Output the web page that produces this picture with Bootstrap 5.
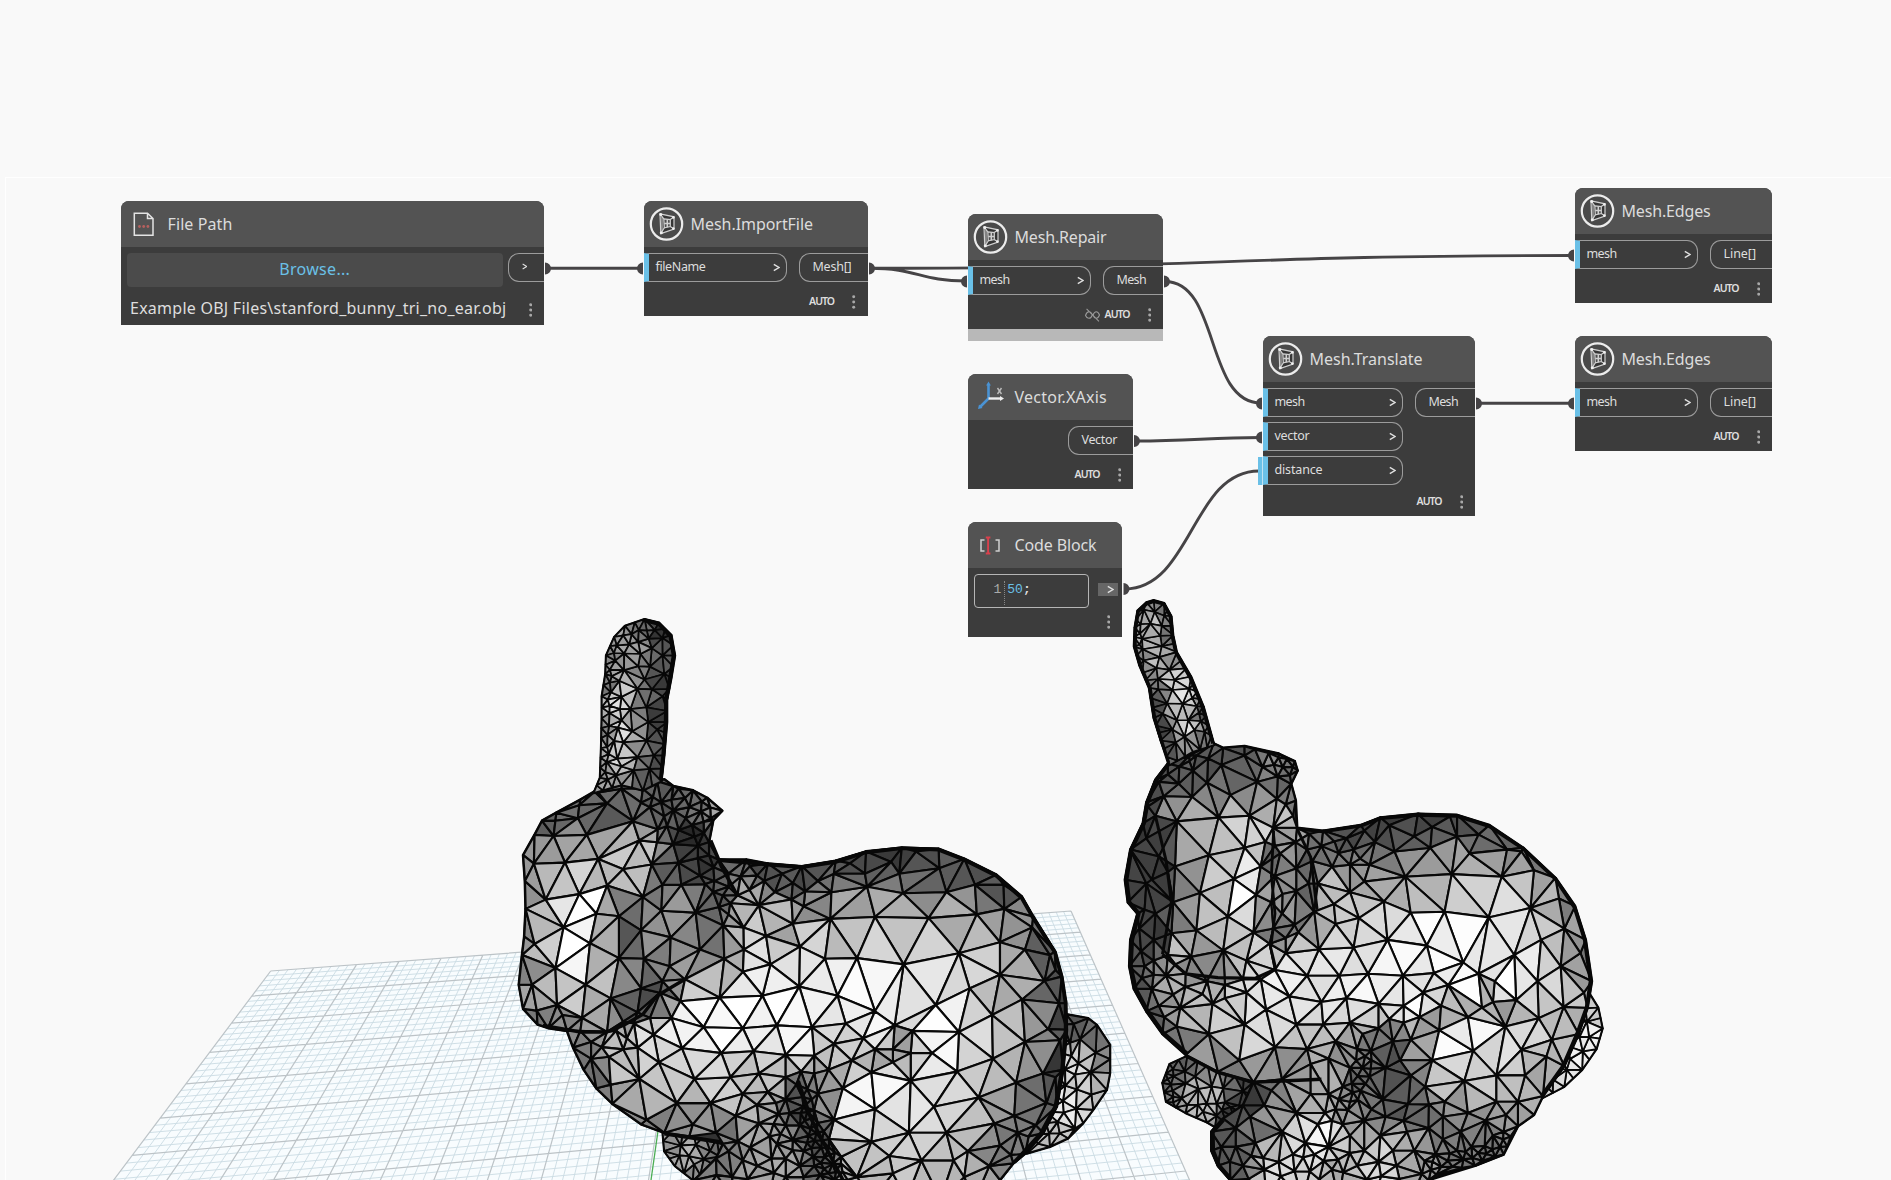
<!DOCTYPE html>
<html lang="en">
<head>
<meta charset="utf-8">
<title>Mesh graph</title>
<link href="https://cdn.jsdelivr.net/npm/bootstrap@5.3.0/dist/css/bootstrap.min.css" rel="stylesheet">
<script src="https://cdn.jsdelivr.net/npm/bootstrap@5.3.0/dist/js/bootstrap.bundle.min.js"></script>
<style>
body{margin:0;background:#f9f9f9;font-family:"Noto Sans","Open Sans",sans-serif;overflow:hidden}
.workspace{width:1891px;height:1180px}
.frame-line{left:5px;top:177px;right:0;bottom:0;border:solid #fff;border-width:1.5px 0 0 1px}
.gnode{background:#3c3c3c;border-radius:8px 8px 0 0;color:#dedede}
.ghead{height:46px;background:#535353;border-radius:8px 8px 0 0;padding-left:5px}
.ghead svg{width:35px;height:36px;flex:none;margin-right:6.5px;margin-bottom:1px}
.gtitle{font-size:16px;line-height:20px;color:#dcdcdc}
.gports{padding-top:6px}
.gports .ins,.gports .outs{gap:5px}
.pin,.pout{height:29px;border:1.3px solid #9c9c9c;font-size:12.5px;line-height:1}
.pin{border-left:5px solid #6ac0e7;border-radius:0 11px 11px 0;padding-left:6.5px;padding-right:6px}
.pout{border-right:0;border-radius:11px 0 0 11px;padding-left:12.5px}
.caret{width:7px;height:9px;margin-bottom:1px}
.pout .caret{width:5.5px;height:7px;margin-bottom:2px}
.gfoot{padding:5px 12px 0 0}
.tall .gfoot{padding-top:2px}
.auto{font-size:10.5px;font-weight:600;line-height:1;margin-right:18px}
.dots{width:3.4px;height:14px;flex:none}
.t{white-space:nowrap;display:inline-block}
.browse{width:376px;height:34px;background:#4b4b4b;border-radius:4px;color:#6ac0e7;font-size:16px;margin-left:5.7px;padding-bottom:2px}
.filerow{padding:4px 12px 0 9px}
.filerow .dots{margin-top:4px}
.codebox{width:115px;height:34px;border:1.3px solid #b5b5b5;border-radius:4px;margin:6px 0 0 6px;font-family:"Liberation Mono",monospace;font-size:13px;line-height:1;padding:8px 0 0 18.5px}
.codebox .rule{width:1px;height:24px;border-left:1px dotted #888;margin:-2px 2px 0 3px}
.codebox b{font-weight:700}
.codeout{width:20px;height:13px;background:#666;margin-top:15px;margin-right:4px;padding-right:4px}
.codefoot{padding:0 12px 1px 0}
</style>
</head>
<body>
<div class="workspace position-relative overflow-hidden">
  <div class="frame-line position-absolute"></div>
  <svg id="scene" class="position-absolute top-0 start-0" width="1891" height="1180"></svg>
  <svg class="position-absolute top-0 start-0" width="1891" height="1180" fill="none" stroke="#464446" stroke-width="2.900">
    <path d="M547 268.300H642M870 268.300C1220 268.300 1222 255.500 1573 255.500M870 268.300C917 268.300 920 281 966 281M1165 281.500C1220 281.500 1205 403 1261 403M1136 441C1190 441 1210 437.500 1261 437.500M1125 589C1192 588 1192 471 1259 471M1477 403.300H1573"/>
    <g fill="#464446" stroke="none">
      <path d="M545 262.500a5.500 5.500 0 0 1 0 12zM869 262.500a5.500 5.500 0 0 1 0 12zM1164 275.500a5.500 5.500 0 0 1 0 12zM1134 435a5.500 5.500 0 0 1 0 12zM1123.500 583a5.500 5.500 0 0 1 0 12zM1476 397.500a5.500 5.500 0 0 1 0 12z"/>
      <path d="M643 262.500a5.500 5.500 0 0 0 0 12zM967 275.500a5.500 5.500 0 0 0 0 12zM1262 397.500a5.500 5.500 0 0 0 0 12zM1262 431.500a5.500 5.500 0 0 0 0 12zM1574 249.500a5.500 5.500 0 0 0 0 12zM1574 397.500a5.500 5.500 0 0 0 0 12z"/>
    </g>
    <path d="M1260.200 457v28" stroke="#6ac0e7" stroke-width="4.400"/>
  </svg>
  <div id="nodes"></div>
</div>
<script>
/* ---------- icons ---------- */
const ICON={
 mesh:`<svg viewBox="0 0 35 36"><circle cx="17.500" cy="18" r="15.700" fill="#4a4a4a" stroke="#ececec" stroke-width="2.200"/><g fill="none" stroke="#d0d0d0" stroke-width="1.200"><path d="M11 7.800L25 10.800V23L11.800 27.600Z" fill="#353535"/><path d="M14.800 12.800L21.300 13.600V20.600L15.300 21.800Z" fill="#4c4c4c"/><path d="M11 7.800L14.800 12.800M25 10.800L21.300 13.600M25 23L21.300 20.600M11.800 27.600L15.300 21.800"/><path d="M18.300 13.200V21.200M15.300 17.500h6" stroke-width="1.500"/><path d="M13 11V25" stroke-width="1"/></g><g fill="#f0f0f0"><circle cx="11.800" cy="8.600" r="1.500"/><circle cx="24.400" cy="11.400" r="1.300"/><circle cx="12.300" cy="26.800" r="1.500"/><circle cx="24.400" cy="22.600" r="1.300"/></g></svg>`,
 file:`<svg viewBox="0 0 35 36"><path d="M8.300 7.200H21.500L27 12.500V29.300H8.300Z M21.500 7.200V12.500H27" fill="none" stroke="#e4e4e4" stroke-width="1.500"/><g fill="#b5605e"><circle cx="13.500" cy="20.500" r="1.400"/><circle cx="17.700" cy="20.500" r="1.400"/><circle cx="21.900" cy="20.500" r="1.400"/></g></svg>`,
 axis:`<svg viewBox="0 0 35 36"><path d="M15.500 19.500V6M15.500 19.500L7 28" stroke="#4a93d4" stroke-width="2.600"/><path d="M15.500 2.500l2.400 4h-4.800zM5 30l1-4.600 3.600 3.600z" fill="#4a93d4"/><path d="M15.500 19.500H27" stroke="#eee" stroke-width="2.400"/><path d="M31 19.500l-4-2.500v5z" fill="#eee"/><path d="M24.500 9l4 6M28.500 9l-4 6" stroke="#bbb" stroke-width="1.400"/></svg>`,
 code:`<svg viewBox="0 0 35 36"><path d="M11.500 13H8v11h3.500M22.500 13H26v11h-3.500" fill="none" stroke="#d0d0d0" stroke-width="1.500"/><path d="M12.800 10.500h4.600M12.800 26.500h4.600M15.100 10.500v16" stroke="#d8404c" stroke-width="1.900" fill="none"/></svg>`
};
const CARET='<svg class="caret" viewBox="0 0 7 9"><path d="M.8 1.300L6 4.500.8 7.700" fill="none" stroke="#e0e0e0" stroke-width="1.400"/></svg>';
const DOTS='<svg class="dots" viewBox="0 0 3.400 14" fill="#a8a8a8"><circle cx="1.700" cy="1.800" r="1.500"/><circle cx="1.700" cy="7" r="1.500"/><circle cx="1.700" cy="12.200" r="1.500"/></svg>';
const HIDE='<svg width="17" height="14" viewBox="0 0 15 13" class="me-1" fill="none" stroke="#999" stroke-width="1"><path d="M1 7C2.500 2.500 6 2.500 7.300 6.500C6 10.500 2.500 10.500 1 7ZM8 6.500C9.500 2.500 12.500 2.500 14 6.500C12.500 10.500 9.500 10.500 8 6.500M2 .8L13.500 12.500"/></svg>';
const T=(s,w,c='')=>`<span class="t ${c}" data-w="${w}">${s}</span>`;
const AUTO=T('AUTO',25,'auto');

/* ---------- graph nodes ---------- */
const G=[
 {x:644,y:201,w:223.5,h:115,t:['Mesh.ImportFile',122.5],i:'mesh',iw:143,ow:68.5,ins:[['fileName',50]],out:['Mesh[]',39]},
 {x:968,y:214,w:195,h:115,t:['Mesh.Repair',92],i:'mesh',iw:123,ow:60,ins:[['mesh',30]],out:['Mesh',29.5],hid:1},
 {x:1575,y:188,w:197,h:115,t:['Mesh.Edges',89],i:'mesh',iw:123,ow:62,ins:[['mesh',30]],out:['Line[]',32.5]},
 {x:1575,y:336,w:197,h:115,t:['Mesh.Edges',89],i:'mesh',iw:123,ow:62,ins:[['mesh',30]],out:['Line[]',32.5]},
 {x:1263,y:336,w:212,h:180,t:['Mesh.Translate',113],i:'mesh',c:'tall',iw:140,ow:60,ins:[['mesh',30],['vector',35],['distance',48]],out:['Mesh',29.5]},
 {x:968,y:374,w:165,h:115,t:['Vector.XAxis',92.5],i:'axis',iw:0,ow:65,ins:[],out:['Vector',35.5]}
];
const box=(n,inner)=>`<section class="gnode ${n.c||''} position-absolute d-flex flex-column" style="left:${n.x}px;top:${n.y}px;width:${n.w}px;height:${n.h}px"><header class="ghead d-flex align-items-center flex-shrink-0">${ICON[n.i]}${T(n.t[0],n.t[1],'gtitle')}</header>${inner}</section>`;
let h='';
h+=box({x:121,y:201,w:423,h:124,t:['File Path',65],i:'file'},
 `<div class="gports d-flex justify-content-between align-items-start"><div class="browse d-flex justify-content-center align-items-center">${T('Browse...',71)}</div><div class="pout d-flex align-items-center" style="width:36px">${CARET}</div></div>
  <div class="filerow d-flex justify-content-between align-items-center flex-fill">${T('Example OBJ Files\\stanford_bunny_tri_no_ear.obj',376.5)}${DOTS}</div>`);
for(const n of G){
 h+=box(n,`<div class="gports d-flex justify-content-between align-items-start"><div class="ins d-flex flex-column">${n.ins.map(p=>`<div class="pin d-flex align-items-center justify-content-between" style="width:${n.iw}px">${T(p[0],p[1])}${CARET}</div>`).join('')}</div><div class="outs"><div class="pout d-flex align-items-center" style="width:${n.ow}px">${T(n.out[0],n.out[1])}</div></div></div>
 <footer class="gfoot d-flex flex-fill align-items-center justify-content-end">${n.hid?HIDE:''}${AUTO}${DOTS}</footer>`);
}
h+='<div class="position-absolute" style="left:968px;top:329px;width:195px;height:12px;background:#b8b8b8"></div>';
h+=box({x:968,y:522,w:154,h:115,t:['Code Block',82],i:'code'},
 `<div class="d-flex justify-content-between align-items-start"><div class="codebox d-flex align-items-start"><span style="color:#aaa">1</span><span class="rule"></span><span style="color:#6ac0e7">50</span><b>;</b></div><div class="codeout d-flex align-items-center justify-content-end">${CARET}</div></div><footer class="codefoot d-flex flex-fill align-items-center justify-content-end">${DOTS}</footer>`);
document.getElementById('nodes').innerHTML=h;
/* tracking fitted to each label's width */
document.querySelectorAll('.t').forEach(e=>{
 const w=e.getBoundingClientRect().width,n=e.textContent.length;
 e.style.letterSpacing=((+e.dataset.w-w)/n).toFixed(3)+'px';
});

/* ---------- ground grid in perspective ---------- */
let svg='';
(function(){
 const src=[[0,0],[20,0],[20,6],[0,6]],dst=[[270.7,971],[1071,911],[1138.2,1063.5],[132.3,1155.3]],A=[];
 src.forEach(([x,y],k)=>{const [u,v]=dst[k];A.push([x,y,1,0,0,0,-u*x,-u*y,u],[0,0,0,x,y,1,-v*x,-v*y,v]);});
 for(let i=0;i<8;i++){let p=i;for(let r=i;r<8;r++)if(Math.abs(A[r][i])>Math.abs(A[p][i]))p=r;[A[i],A[p]]=[A[p],A[i]];
  for(let r=0;r<8;r++)if(r!==i){const f=A[r][i]/A[i][i];for(let c=i;c<9;c++)A[r][c]-=f*A[i][c];}}
 const H=A.map((r,i)=>r[8]/r[i]);
 const P=(x,y)=>{const w=H[6]*x+H[7]*y+1;return ((H[0]*x+H[1]*y+H[2])/w).toFixed(1)+' '+((H[3]*x+H[4]*y+H[5])/w).toFixed(1);};
 let mi='',ma='';
 for(let i=0;i<=100;i++){const d=`M${P(i/5,0)}L${P(i/5,11)}`;i%5?mi+=d:ma+=d;}
 for(let i=0;i<=55;i++){const d=`M${P(0,i/5)}L${P(20,i/5)}`;i%5?mi+=d:ma+=d;}
 svg+=`<path d="M${P(0,0)}L${P(20,0)}L${P(20,11)}L${P(0,11)}Z" fill="#f8fcfe"/><path d="${mi}" stroke="#cbdbe3" stroke-width=".9" fill="none"/><path d="${ma}" stroke="#bcc3c7" stroke-width="1.200" fill="none"/><path d="M658 1131L651 1180" stroke="#4cae55" stroke-width="1.300"/>`;
})();

/* ---------- mesh rendering ---------- */
let seed=7;const rnd=()=>(seed=(seed*16807)%2147483647)/2147483647;
const N=s=>{const a=s.trim().split(/[\s,;]+/).map(Number),o=[];for(let i=0;i+1<a.length;i+=2)o.push([a[i],a[i+1]]);return o;};
const inside=(p,g)=>{let c=false;for(let i=0,j=g.length-1;i<g.length;j=i++)if((g[i][1]>p[1])!==(g[j][1]>p[1])&&p[0]<(g[j][0]-g[i][0])*(p[1]-g[i][1])/(g[j][1]-g[i][1])+g[i][0])c=!c;return c;};
function scatter(pts,poly,clip,r){
 const xs=poly.map(p=>p[0]),ys=poly.map(p=>p[1]),x0=Math.min(...xs),x1=Math.max(...xs),y0=Math.min(...ys),y1=Math.max(...ys);
 const n=Math.round((x1-x0)*(y1-y0)/(r*r)*14);
 for(let k=0;k<n;k++){const p=[x0+rnd()*(x1-x0),y0+rnd()*(y1-y0)];
  if(!inside(p,poly)||!inside(p,clip))continue;
  if(pts.every(q=>(q[0]-p[0])**2+(q[1]-p[1])**2>r*r))pts.push(p);}
}
function delaunay(P){
 const n=P.length,pts=P.map(p=>[p[0]+(rnd()-.5)*.01,p[1]+(rnd()-.5)*.01]);pts.push([-9e3,-9e3],[12e3,-9e3],[0,15e3]);
 const cc=(a,b,c)=>{const[ax,ay]=pts[a],[bx,by]=pts[b],[cx,cy]=pts[c],d=2*(ax*(by-cy)+bx*(cy-ay)+cx*(ay-by)),A=ax*ax+ay*ay,B=bx*bx+by*by,C=cx*cx+cy*cy;
  const x=(A*(by-cy)+B*(cy-ay)+C*(ay-by))/d,y=(A*(cx-bx)+B*(ax-cx)+C*(bx-ax))/d;return{v:[a,b,c],x,y,r:(ax-x)**2+(ay-y)**2};};
 let T=[cc(n,n+1,n+2)];
 for(let i=0;i<n;i++){const E=new Map(),K=[];
  for(const t of T){if((pts[i][0]-t.x)**2+(pts[i][1]-t.y)**2<t.r){for(let k=0;k<3;k++){const a=t.v[k],b=t.v[(k+1)%3],key=a<b?a+'_'+b:b+'_'+a;E.has(key)?E.set(key,null):E.set(key,[a,b]);}}else K.push(t);}
  for(const e of E.values())if(e)K.push(cc(e[0],e[1],i));T=K;}
 return T.map(t=>t.v).filter(v=>v.every(k=>k<n));
}
function part(M,outline,inner,zones,shade,sw,step){
 const o=[];outline.forEach((p,i)=>{const q=outline[(i+1)%outline.length],L=Math.hypot(q[0]-p[0],q[1]-p[1]),k=Math.max(1,Math.round(L/step));for(let j=0;j<k;j++)o.push([p[0]+(q[0]-p[0])*j/k,p[1]+(q[1]-p[1])*j/k]);});
 const pts=o.slice();
 inner.forEach(p=>{if(pts.every(q=>(q[0]-p[0])**2+(q[1]-p[1])**2>64))pts.push(p);});
 zones.forEach(z=>scatter(pts,z[0],outline,z[1]));
 const S=p=>{let s=0,w=0;for(const q of shade){const k=1/(((q[0]-p[0])**2+(q[1]-p[1])**2+60)**2);s+=q[2]*k;w+=k;}return s/w;};
 const f=p=>(M[0]+p[0]/M[2]).toFixed(1)+' '+(M[1]+p[1]/M[3]).toFixed(1);
 svg+=`<g stroke="#080808" stroke-width="${sw}" stroke-linejoin="round">`;
 svg+=`<path d="M${outline.map(f).join('L')}Z" fill="#333" stroke-width="${sw+.7}"/>`;
 for(const v of delaunay(pts)){const[a,b,c]=v.map(k=>pts[k]),m=[(a[0]+b[0]+c[0])/3,(a[1]+b[1]+c[1])/3];
  if(!inside(m,outline))continue;const g=Math.max(25,Math.min(255,Math.round(S(m)+(rnd()-.5)*18)));
  svg+=`<path d="M${f(a)}L${f(b)}L${f(c)}Z" fill="rgb(${g},${g},${g})"/>`;}
 svg+='</g>';
}
const tri=s=>{const a=s.trim().split(/[\s,;]+/).map(Number),o=[];for(let i=0;i+2<a.length;i+=3)o.push([a[i],a[i+1],a[i+2]]);return o;};
const stroke=(M,s,w)=>{svg+=`<path d="M${N(s).map(p=>(M[0]+p[0]/M[2]).toFixed(1)+' '+(M[1]+p[1]/M[3]).toFixed(1)).join('L')}" fill="none" stroke="#080808" stroke-linejoin="round" stroke-width="${w}"/>`;};

/* left rabbit */
const ML=[500,600,2.8,2.7034];
{
 const tail=N('1560,1122 1585,1120 1647,1131 1671,1149 1708,1203 1708,1279 1699,1324 1661,1378 1633,1414 1591,1455 1540,1478 1475,1496 1500,1400 1550,1270');
 part(ML,tail,[],[[N('1480,1100 1625,1100 1625,1500 1470,1500'),27],[tail,40]],tri('1600,1150,90 1660,1170,110 1690,1230,130 1690,1320,180 1640,1300,205 1610,1250,220 1590,1370,235 1640,1380,210 1540,1460,190'),1.9,50);
 const foot=N('455,1435 460,1490 490,1530 540,1568 560,1600 640,1600 640,1465 540,1440');
 part(ML,foot,[],[[foot,25]],tri('480,1470,150 530,1500,180 560,1540,140 600,1490,120 620,1540,50 580,1580,40'),1.8,30);
 const body=N('265,518 225,540 158,575 118,597 97,635 65,690 70,760 72,835 68,910 62,960 53,1040 65,1105 105,1147 135,1157 188,1165 205,1210 235,1270 270,1320 315,1362 395,1417 460,1440 530,1450 625,1470 605,1510 545,1568 560,1620 1330,1620 1400,1568 1437,1523 1470,1497 1521,1441 1559,1369 1577,1270 1587,1162 1584,1090 1573,1018 1554,950 1493,856 1461,802 1390,743 1300,700 1228,673 1125,670 1025,680 940,705 845,720 750,713 690,702 612,702 585,655 597,595 622,570 580,535 540,515 485,503 460,485 440,490 400,510 340,490');
 const inner=N('155,597 222,555 300,550 395,548 275,520 340,510 218,590 150,638 243,635 372,598 390,650 100,632 95,713 182,710 275,700 345,728 425,715 128,810 222,795 300,772 400,803 78,835 178,885 270,848 333,855 452,840 395,893 97,930 252,928 155,995 333,968 403,970 478,912 90,1040 240,1040 160,1095 310,1077 395,1050 475,990 103,1110 175,1122 230,1130 300,1168 225,1165 345,1140 385,1115 448,1062 455,1030 518,1025 440,655 442,620 420,560 460,585 485,660 500,710 455,770 508,770 548,845 480,540 520,590 545,640 560,745 530,560 565,545 590,590 570,600 500,510 575,768 613,830 600,760 625,880 640,775 665,798 640,740 720,745 725,825 682,885 560,945 628,970 683,945 640,850 700,720 740,760 770,790 790,740 820,765 850,828 820,875 745,908 757,985 840,937 925,862 928,790 890,760 935,740 980,712 1022,740 1095,708 1118,740 1165,680 1230,725 1300,705 1028,775 1128,793 1250,790 1330,770 1410,770 1200,860 1050,857 1335,850 1412,835 1000,968 910,970 1130,985 1285,955 1400,925 1470,945 1490,885 1400,1013 1315,1050 1462,1080 1525,1030 1220,1095 1050,1112 945,1070 838,1045 735,1070 615,1075 680,1005 505,1085 480,1130 570,1155 680,1158 775,1150 873,1155 968,1145 1017,1185 1105,1150 1155,1165 1285,1168 1378,1122 1535,1160 1470,1195 1380,1240 1210,1225 1100,1215 1150,1225 1050,1215 1100,1250 1150,1300 1280,1275 935,1200 985,1245 880,1232 800,1230 710,1220 620,1225 510,1212 445,1250 385,1210 430,1175 420,1130 325,1165 355,1185 375,1145 305,1235 255,1240 255,1195 310,1310 390,1295 345,1215 410,1405 495,1360 540,1418 590,1360 545,1295 645,1290 725,1280 680,1335 660,1395 605,1440 750,1330 720,1365 725,1415 800,1290 843,1275 880,1280 920,1270 890,1335 960,1320 1040,1277 1050,1377 935,1405 1215,1370 1340,1345 1445,1305 1145,1440 1250,1440 1385,1415 1040,1465 955,1505 1090,1503 1180,1515 1270,1515 1310,1490 1520,1280 1530,1360 1440,1395 1450,1440 1400,1475 1370,1530 1300,1560 1100,1550 1000,1560 830,1310 850,1370 800,1350 780,1390 800,1420 840,1420 870,1430 820,1460 775,1470 700,1480 640,1490 650,1560 720,1530 760,1510 800,1510 850,1490 900,1480 880,1530 920,1550 850,1560 800,1560 1555,1000 1540,960 1565,1090 1568,1190 1555,1290 1500,1420 1480,1450 1430,1500');
 const sh=tri('80,780,150 120,700,150 140,610,95 300,575,90 250,600,105 200,660,160 300,660,160 130,760,190 220,750,215 280,740,190 330,700,210 400,690,195 375,760,190 365,830,110 365,900,90 300,820,160 260,810,250 210,860,250 130,870,200 210,920,255 130,960,200 200,990,255 290,920,165 290,990,165 85,890,130 75,1000,120 120,1040,190 200,1070,200 280,1030,190 260,1110,170 350,1030,140 370,1110,80 420,1060,70 200,1140,140 120,1130,120 430,850,140 420,780,120 500,830,155 440,930,140 540,890,140 480,720,90 560,720,60 540,640,40 560,570,110 600,570,160 470,560,90 350,510,110 600,800,90 600,900,100 450,970,130 550,980,150 640,1000,170 700,800,170 750,740,80 850,760,80 1000,710,70 1100,690,60 1200,700,70 1300,730,75 1400,790,80 1000,760,110 1150,760,110 1250,750,100 1360,800,120 880,820,140 980,820,165 1100,830,180 1270,830,175 780,860,185 700,880,200 790,900,160 870,920,210 960,920,195 1060,930,215 1200,930,210 1350,900,180 1440,880,150 800,970,225 720,950,230 900,1010,230 1010,1030,255 1080,1030,255 1200,1030,225 1350,980,210 1450,1020,175 1520,960,100 1545,1050,80 1500,1110,150 1570,1100,60 650,1040,235 750,1030,240 560,1050,210 680,1110,255 560,1120,255 780,1100,250 880,1090,235 970,1110,245 600,1190,255 500,1170,240 730,1190,235 820,1190,240 920,1180,210 1060,1170,240 1000,1220,210 1120,1200,150 1060,1250,160 1180,1170,220 1240,1150,255 1250,1230,250 1340,1190,215 1440,1160,200 1500,1220,140 1420,1280,180 1340,1290,205 1220,1320,225 1090,1310,255 1000,1340,255 930,1310,150 920,1370,150 1000,1430,220 1150,1400,225 1280,1400,205 1400,1380,160 1480,1380,110 1550,1250,60 1540,1350,90 1420,1460,120 1250,1490,190 1100,1480,200 1000,1530,190 400,1180,220 330,1210,190 230,1210,120 270,1290,110 340,1270,190 360,1340,170 460,1330,200 450,1260,215 540,1250,225 340,1360,110 440,1410,130 560,1400,150 640,1340,200 700,1270,200 600,1320,205 700,1380,180 620,1430,120 760,1300,190 830,1340,90 850,1400,70 880,1450,70 800,1450,150 900,1540,90 740,1430,170 700,1520,160 640,1510,120 800,1530,170');
 part(ML,body,inner,[[N('830,1290 870,1330 900,1420 990,1568 900,1568 840,1420'),18],[N('760,1330 850,1350 860,1568 740,1568'),27],[N('420,530 600,520 590,640 480,640'),26],[N('520,590 590,590 640,740 660,830 600,800 540,680'),25],[N('612,700 760,712 860,760 850,820 650,780'),33],[N('190,1165 340,1165 380,1200 300,1250 230,1260'),32],[N('600,1450 900,1450 900,1568 560,1568'),36]],sh,2.15,95);
 stroke(ML,'120,1150 225,1168 300,1168 345,1150 400,1120 440,1070 518,1025',3.4);
 stroke(ML,'835,1300 870,1400 960,1568',3.6);stroke(ML,'590,650 620,720 665,800',3.6);
 stroke(ML,'612,703 750,715 845,722 940,708 1025,682 1125,671 1228,675 1300,702 1390,746 1461,806 1493,860 1554,953 1573,1020 1584,1090 1584,1162 1574,1270 1555,1369 1515,1441 1440,1520',3.8);
 stroke(ML,'460,1442 620,1466',4);
 const ear=N('262,522 280,480 283,400 285,320 285,260 295,200 297,150 320,100 350,70 405,52 445,61 480,95 490,150 480,210 468,270 468,330 460,420 452,490 400,515 340,500');
 part(ML,ear,N('425,130 420,180 405,215 385,240 455,260 410,290 415,330 440,350 410,380 430,420 340,262 365,295 340,325 370,355 345,385 330,345 385,425 340,450 455,150 460,200'),[[N('262,522 280,100 340,60 320,200 308,300 305,500'),17],[N('300,522 300,100 350,100 350,300 345,500'),24],[N('320,60 480,60 480,100 320,130'),21],[N('470,90 495,90 480,260 470,490 450,490 460,300'),22],[ear,33]],tri('310,150,140 340,110,160 400,90,110 450,90,50 390,130,165 340,200,175 300,230,120 350,250,200 330,280,225 440,150,100 450,210,60 400,190,120 400,260,120 440,300,65 340,350,230 370,330,160 390,340,140 430,360,80 440,320,60 350,390,210 300,350,130 300,450,150 330,440,220 390,410,130 440,440,70 340,490,150 400,490,90'),1.75,30);
 stroke(ML,'405,55 445,65 477,98 486,150 476,210 465,270 464,330 457,420 450,485',3.8);
}
/* right rabbit */
const MR=[1100,590,2.8,2.6576];
{
 const tail=N('1340,1060 1372,1075 1395,1110 1407,1165 1390,1220 1350,1275 1300,1320 1235,1352 1200,1350 1250,1250 1320,1150');
 part(MR,tail,[],[[tail,26]],tri('1385,1130,200 1370,1170,240 1350,1220,240 1310,1270,235 1260,1330,210'),1.8,34);
 const foot=N('245,1238 195,1260 175,1310 185,1360 240,1390 300,1415 345,1440 400,1440 450,1320 330,1275');
 part(MR,foot,[],[[N('175,1250 205,1250 210,1370 175,1370'),14],[N('180,1345 400,1365 400,1440'),20],[foot,30]],tri('240,1270,100 280,1270,130 200,1310,110 260,1320,185 320,1330,185 300,1380,190 360,1310,110 400,1330,60 360,1400,60'),1.8,28);
 const body=N('190,462 155,505 130,565 120,620 85,690 70,770 78,830 105,860 85,930 82,1000 95,1060 130,1120 175,1180 240,1235 330,1280 430,1308 400,1370 345,1405 312,1440 312,1490 330,1530 365,1568 365,1620 870,1620 920,1568 1050,1530 1130,1500 1170,1425 1215,1395 1240,1345 1300,1265 1340,1180 1365,1110 1377,1040 1360,930 1330,840 1275,765 1185,685 1090,625 1000,598 890,595 785,605 730,625 625,640 552,632 548,560 535,515 553,480 545,455 500,435 405,415 345,420 318,408 250,440');
 const inner=N('190,490 250,455 260,480 340,465 300,512 220,515 270,440 405,440 455,470 440,510 365,545 258,550 178,548 500,445 540,470 495,555 165,510 215,615 135,575 332,605 418,600 485,632 155,600 130,660 305,705 405,685 463,670 490,680 210,735 165,708 375,768 450,735 205,830 280,805 437,810 145,770 358,868 190,750 270,905 200,912 430,910 475,940 345,958 255,975 410,985 190,970 155,860 130,780 125,850 480,830 490,760 505,700 548,670 540,600 520,570 550,740 510,860 550,800 545,890 555,910 600,855 585,780 610,780 650,735 595,720 580,690 620,680 700,730 740,775 755,730 710,690 770,670 825,695 855,762 795,828 700,803 655,835 660,888 725,872 690,660 740,640 810,625 880,655 930,630 980,602 925,685 1035,700 1000,655 985,755 1060,650 1140,690 1125,762 1215,745 1180,695 1285,820 1205,845 1088,870 965,855 870,858 805,930 915,945 1017,990 1160,970 1235,930 1300,900 1345,965 1290,1000 1225,1040 1355,1070 1298,1108 1228,1138 1165,1090 1105,1040 1060,1020 975,1050 935,1018 848,1025 750,1020 670,1025 580,1025 520,965 613,955 710,950 490,1010 450,1035 530,1080 465,1115 410,1070 400,1035 315,1100 350,1050 300,1040 240,1020 185,1025 150,985 205,1075 225,1110 165,1105 145,1060 125,1000 115,960 110,900 150,930 180,1135 215,1160 305,1180 405,1155 390,1250 490,1215 550,1155 620,1095 625,1155 690,1085 780,1100 700,1150 580,1220 510,1300 590,1260 640,1245 660,1200 735,1180 780,1165 850,1105 895,1135 905,1070 950,1170 955,1105 850,1150 810,1140 870,1195 930,1250 1045,1225 1135,1160 1030,1135 1070,1110 1100,1095 1180,1222 1265,1195 1250,1240 1110,1290 1190,1290 1020,1305 910,1320 965,1360 1110,1360 1030,1390 1170,1360 870,1290 840,1250 800,1270 760,1250 820,1200 720,1220 700,1270 680,1320 730,1330 760,1380 700,1360 640,1340 660,1380 590,1340 550,1390 480,1330 460,1370 420,1400 510,1440 435,1470 380,1480 340,1480 380,1430 575,1470 540,1500 500,1520 460,1540 400,1530 610,1420 630,1390 640,1480 600,1500 680,1420 700,1450 740,1410 740,1490 785,1450 800,1400 850,1410 820,1490 860,1440 880,1490 920,1430 960,1400 1010,1440 960,1460 1080,1410 1100,1450 1040,1480 1000,1490 940,1500 1130,1440 1120,1480 720,1530 780,1520 830,1530 650,1540');
 const sh=tri('200,490,80 300,470,85 260,500,95 400,480,100 400,430,90 500,450,140 530,490,110 200,540,100 310,535,130 430,545,130 500,530,110 150,570,70 140,640,60 100,740,60 170,660,70 120,800,70 160,800,60 185,740,50 190,850,90 175,920,60 130,900,70 195,585,160 260,590,175 380,580,180 460,580,180 520,600,190 250,660,175 240,740,150 230,800,135 240,850,145 330,660,195 400,640,205 450,640,210 340,740,205 420,730,230 430,780,225 330,800,195 390,830,255 300,860,190 400,890,215 320,920,180 280,940,160 220,960,190 370,940,195 430,970,210 460,850,155 475,760,110 490,900,110 495,700,90 530,680,170 540,580,120 520,780,140 530,850,150 580,720,90 590,800,100 570,870,110 610,890,160 340,985,130 260,1000,130 420,1010,210 120,960,80 110,1040,80 160,1020,140 200,1050,170 160,1130,90 230,1190,110 200,1110,150 260,1130,185 260,1080,190 340,1140,205 300,1220,160 350,1200,200 440,1200,215 340,1260,110 450,1260,160 440,1140,225 420,1050,230 500,1050,240 550,1000,225 500,1150,220 600,1130,225 560,1190,200 620,700,110 700,660,75 800,630,60 900,610,60 1000,620,75 850,670,95 950,660,90 1080,670,110 1150,680,110 780,710,120 900,720,150 990,720,165 1080,740,175 1170,740,160 1240,760,110 640,780,185 700,760,150 760,780,150 730,830,200 790,790,175 860,810,175 930,820,185 1040,810,215 1160,810,215 1250,800,185 1310,830,120 620,850,190 690,860,210 760,870,210 850,890,225 920,890,255 1020,920,255 1120,940,235 1200,910,220 1270,900,205 1340,930,150 1345,1010,160 1365,1000,110 650,930,220 760,920,225 860,970,255 800,980,240 950,990,245 1050,960,235 700,1000,230 600,990,230 640,1060,230 740,1060,255 820,1050,240 880,1100,255 900,1040,225 1030,1040,255 1080,1070,170 1130,1050,250 1200,1010,230 1260,1040,215 1310,1060,200 1130,1110,160 1040,1110,180 1000,1130,170 920,1150,160 830,1110,230 760,1130,215 680,1120,220 1040,1170,255 990,1210,250 900,1220,160 820,1240,80 830,1310,80 870,1330,110 800,1180,110 760,1210,120 1150,1200,225 1220,1180,215 1090,1240,220 1000,1260,215 1140,1270,205 1300,1150,180 1250,1260,170 1050,1320,200 960,1310,190 1120,1330,190 1000,1370,150 900,1390,100 1050,1410,140 1150,1390,160 950,1430,120 1080,1470,120 850,1370,90 780,1380,110 720,1300,100 680,1260,150 640,1290,170 600,1230,170 540,1260,150 700,1400,150 560,1320,150 560,1360,170 500,1310,110 430,1350,50 480,1390,160 420,1430,120 370,1410,70 340,1460,90 440,1450,90 480,1470,190 550,1430,215 620,1450,255 620,1490,240 560,1490,220 480,1540,220 380,1530,90 680,1480,200 740,1450,170 780,1500,210 850,1470,180 780,1550,220 660,1540,170 900,1530,160 1000,1510,120');
 part(MR,body,inner,[[N('740,1210 780,1240 740,1350 660,1420 630,1400'),21],[N('330,1500 660,1490 700,1568 360,1568'),30],[N('900,1500 1150,1450 1140,1500 900,1568'),20],[N('430,420 553,440 550,500 500,500'),22],[N('230,410 320,410 340,450 200,480'),27],[N('85,860 150,850 250,1060 160,1120 90,1060'),32],[N('250,1020 420,1030 410,1090 260,1080'),34],[N('740,1350 1200,1380 1130,1440 740,1440'),40],[N('560,640 620,650 740,700 740,730 600,720'),30],[N('480,640 550,640 550,900 480,960'),38],[N('500,1500 880,1480 860,1568 500,1568'),34]],sh,2.1,95);
 stroke(MR,'175,968 240,1020 330,1030 435,1032 490,1008',3.2);
 stroke(MR,'486,640 480,760 490,860 478,950 492,1005',2.8);
 stroke(MR,'155,600 185,720 200,830 175,968',3);stroke(MR,'552,635 590,710 608,850',3);
 stroke(MR,'240,1238 330,1282 430,1308 620,1300',3.4);
 stroke(MR,'192,462 157,505 133,565 123,620 88,690 74,770 82,830 108,860 90,930 86,1000 100,1060 134,1120 178,1178 245,1233',4);
 stroke(MR,'552,634 625,642 730,627 785,607 890,598 1000,601 1090,628 1185,688 1275,768 1328,843 1357,930 1373,1040 1362,1110 1335,1180 1296,1265 1236,1345',3.4);
 stroke(MR,'345,1408 315,1440 316,1490 333,1530 368,1568',4.4);
 const ear=N('195,465 170,400 150,340 137,260 110,200 95,150 97,100 105,55 130,33 150,27 180,35 200,70 205,120 215,165 255,230 290,310 320,412 260,430');
 part(MR,ear,[],[[N('90,50 110,50 130,250 185,460 160,420 90,200'),15],[N('95,25 205,25 205,70 95,70'),18],[N('205,150 230,150 330,410 305,410'),18],[ear,26]],tri('120,60,150 150,90,190 180,70,120 190,120,110 140,130,180 160,180,190 120,180,130 200,190,150 210,240,215 160,250,120 230,290,230 170,310,75 210,330,190 250,330,190 280,330,80 180,370,60 250,370,230 230,400,160 200,420,90 280,400,120'),1.65,24);
 stroke(MR,'192,460 172,400 153,340 140,260 113,200 98,150 100,100 107,57 130,37 150,30 178,37 197,70 202,120 212,165 252,232 287,312 316,408',3.4);
}
document.getElementById('scene').innerHTML=svg;
</script>
</body>
</html>
